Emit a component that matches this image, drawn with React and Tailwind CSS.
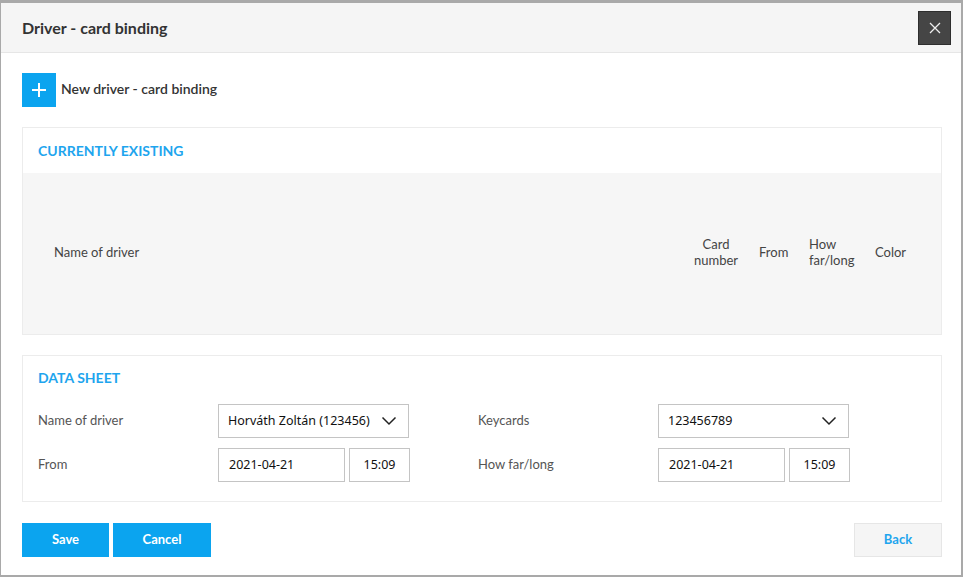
const BLUE = "bg-[#0ba4ef]";

const Chevron = () => (
  <svg width="16" height="10" viewBox="0 0 16 10" fill="none">
    <path d="M1.5 1.5 L8 8 L14.5 1.5" stroke="#222" strokeWidth="1.5" />
  </svg>
);

const Select = ({ value }) => (
  <div className="flex items-center justify-between w-[191px] h-[34px] border border-[#c4c4c4] bg-white pl-[9px] pr-[11px] text-[12.5px] text-[#111] font-['Noto_Sans',sans-serif]">
    <span>{value}</span>
    <Chevron />
  </div>
);

const DateTime = ({ date, time }) => (
  <div className="flex gap-[4px] font-['Noto_Sans',sans-serif] text-[12.5px] text-[#111]">
    <div className="flex items-center w-[127px] h-[34px] border border-[#c4c4c4] pl-[10px]">{date}</div>
    <div className="flex items-center justify-center w-[61px] h-[34px] border border-[#c4c4c4]">{time}</div>
  </div>
);

const Field = ({ label, children }) => (
  <div className="flex items-center w-[440px]">
    <div className="w-[180px] text-[13px] text-[#555]">{label}</div>
    {children}
  </div>
);

export default function App() {
  return (
    <div className="w-[964px] h-[578px] bg-white font-['Lato',sans-serif]">
      <div className="w-[963px] h-[577px] border-2 border-t-[3px] border-[#a9a9a9] border-l-[1px] flex flex-col bg-white">
        <div className="flex items-center justify-between h-[50px] bg-[#f5f5f5] border-b border-[#e6e6e6] pl-[21px] pr-[10px]">
          <h3 className="text-[16px] font-bold text-[#333]">Driver - card binding</h3>
          <button className="w-[33px] h-[34px] bg-[#454545] flex items-center justify-center border border-[#2e2e2e]">
            <svg width="12" height="12" viewBox="0 0 12 12">
              <path d="M1 1 L11 11 M11 1 L1 11" stroke="#eee" strokeWidth="1.3" />
            </svg>
          </button>
        </div>

        <div className="pl-[21px] pr-[19px] pt-[20px] flex-1 flex flex-col">
          <div className="flex items-center gap-[5px]">
            <div className={`w-[34px] h-[34px] ${BLUE} flex items-center justify-center`}>
              <svg width="16" height="16" viewBox="0 0 16 16">
                <path d="M8 1 V15 M1 8 H15" stroke="white" strokeWidth="2" />
              </svg>
            </div>
            <span className="text-[14px] font-semibold text-[#333] -mt-[3px]">New driver - card binding</span>
          </div>

          <div className="mt-[20px] border border-[#ececec]">
            <div className="h-[45px] flex items-center pl-[15px] text-[14px] font-bold text-[#1ea5ee]">
              CURRENTLY EXISTING
            </div>
            <div className="h-[161px] pb-[3px] bg-[#f6f6f6] flex items-center text-[13px] text-[#444] leading-[16px]">
              <div className="flex-1 pl-[31px]">Name of driver</div>
              <div className="w-[56px] text-center">Card<br />number</div>
              <div className="w-[15px]" />
              <div className="w-[30px]">From</div>
              <div className="w-[20px]" />
              <div className="w-[66px]">How<br />far/long</div>
              <div className="w-[34px]">Color</div>
              <div className="w-[32px]" />
            </div>
          </div>

          <div className="mt-[20px] border border-[#ececec] pl-[15px] pt-[11px] pb-[19px]">
            <div className="text-[14px] font-bold text-[#1ea5ee] mb-[16px]">DATA SHEET</div>
            <div className="flex">
              <Field label="Name of driver">
                <Select value="Horváth Zoltán (123456)" />
              </Field>
              <Field label="Keycards">
                <Select value="123456789" />
              </Field>
            </div>
            <div className="flex mt-[10px]">
              <Field label="From">
                <DateTime date="2021-04-21" time="15:09" />
              </Field>
              <Field label="How far/long">
                <DateTime date="2021-04-21" time="15:09" />
              </Field>
            </div>
          </div>

          <div className="mt-[21px] flex items-center">
            <button className={`w-[87px] h-[34px] ${BLUE} text-white text-[13px] font-bold`}>Save</button>
            <button className={`ml-[4px] w-[98px] h-[34px] ${BLUE} text-white text-[13px] font-bold`}>Cancel</button>
            <button className="ml-auto w-[88px] h-[34px] bg-[#f5f5f5] border border-[#e6e6e6] text-[#1ea5ee] text-[13px] font-bold">
              Back
            </button>
          </div>
        </div>
      </div>
    </div>
  );
}
